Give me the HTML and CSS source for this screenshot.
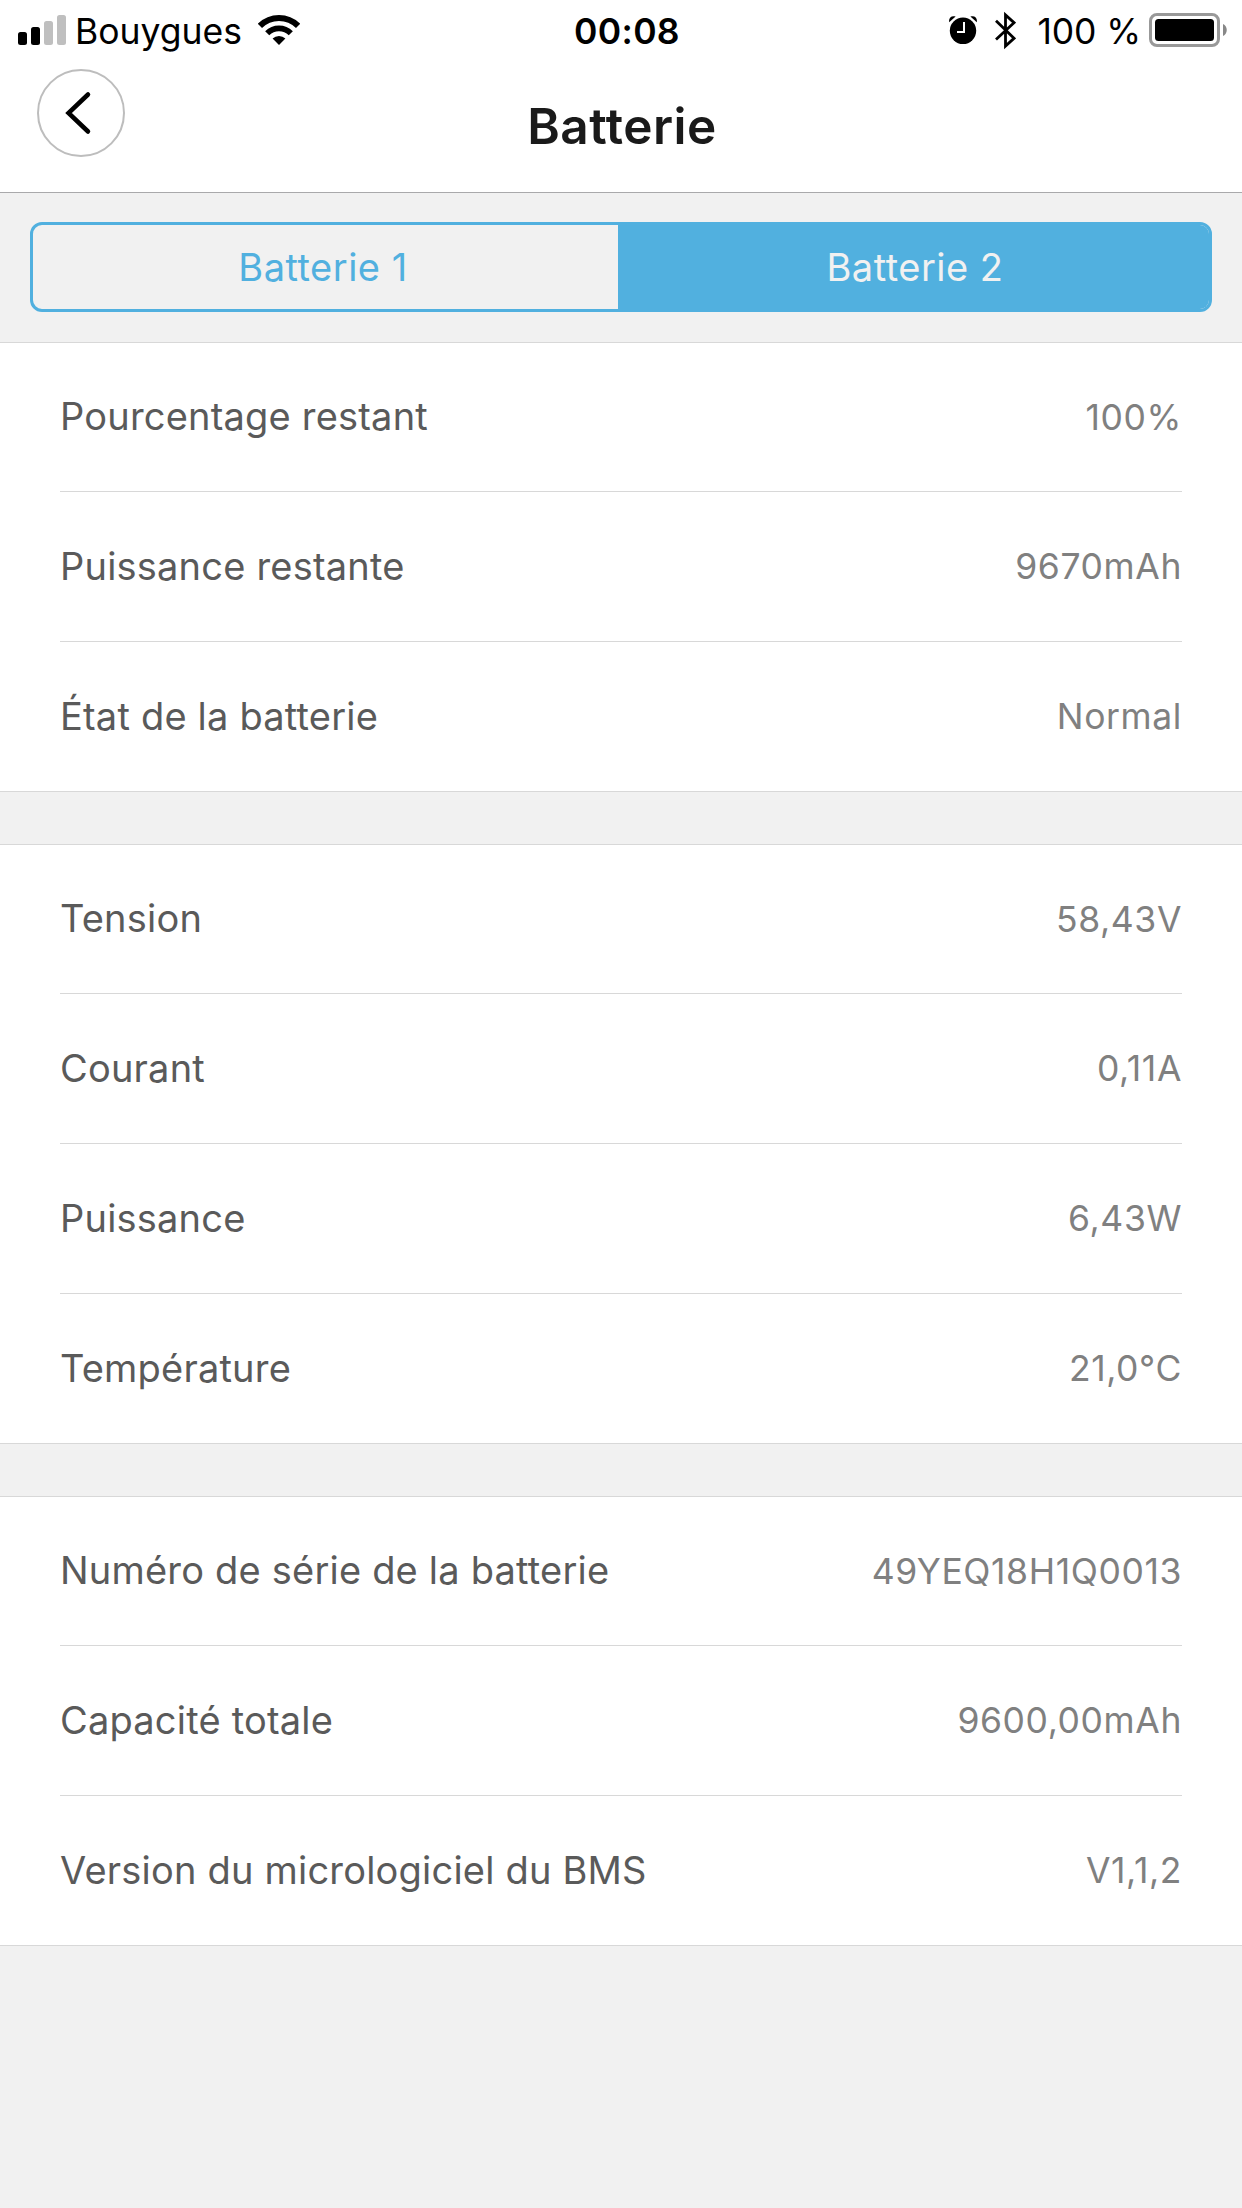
FILE: index.html
```html
<!DOCTYPE html>
<html lang="fr">
<head>
    <meta charset="UTF-8">
    <meta name="viewport" content="width=device-width, initial-scale=1.0">
    <title>Batterie</title>
    <link rel="stylesheet" href="styles.css">
</head>
<body>
    <div class="status-bar">
        <div class="status-left">
            <svg class="signal" width="48" height="62" viewBox="0 0 48 62">
                <rect x="0" y="32" width="9" height="13" rx="2.5"/>
                <rect x="13" y="27" width="9" height="18" rx="2.5"/>
                <rect x="26" y="21" width="9" height="24" rx="2.5" fill="#bfbfbf"/>
                <rect x="39" y="15" width="9" height="30" rx="2.5" fill="#bfbfbf"/>
            </svg>
            <span class="carrier">Bouygues</span>
            <svg class="wifi" width="42" height="62" viewBox="0 0 42 62">
                <path d="M1.9 25.9A27 27 0 0 1 40.1 25.9" fill="none" stroke="#000" stroke-width="6"/>
                <path d="M9.2 33.2A16.7 16.7 0 0 1 32.8 33.2" fill="none" stroke="#000" stroke-width="5.8"/>
                <path d="M21 45L14.6 38.6A9.1 9.1 0 0 1 27.4 38.6Z"/>
            </svg>
        </div>
        <div class="time">00:08</div>
        <div class="status-right">
            <svg class="alarm" width="28" height="62" viewBox="0 0 28 62">
                <circle cx="14" cy="30.8" r="13.2"/>
                <path d="M0.2 22.2C-0.6 17.6 2.6 15.2 6.6 16.6Z"/>
                <path d="M27.8 22.2C28.6 17.6 25.4 15.2 21.4 16.6Z"/>
                <path d="M15 22V32H8" fill="none" stroke="#fff" stroke-width="2"/>
            </svg>
            <svg class="bluetooth" width="21" height="62" viewBox="0 0 21 62">
                <path d="M1 20.8L19 38.3L10.5 46V15L19 22.7L1 39.6" fill="none" stroke="#000" stroke-width="2.8"/>
            </svg>
            <span class="percent">100 %</span>
            <svg class="battery" width="78" height="62" viewBox="0 0 78 62">
                <rect x="1.5" y="14.5" width="68" height="31" rx="6.5" fill="none" stroke="#999" stroke-width="3"/>
                <rect x="6" y="19" width="59" height="22" rx="3.5"/>
                <path d="M74 24C79 26 79 34 74 36Z" fill="#888"/>
            </svg>
        </div>
    </div>

    <div class="header">
        <button class="back">
            <svg width="88" height="88" viewBox="0 0 88 88">
                <circle cx="44" cy="44" r="43" fill="none" stroke="#bdbdbd" stroke-width="2"/>
                <path d="M51 25.5L31.5 44L51 62.5" fill="none" stroke="#000" stroke-width="4.5" stroke-linecap="round"/>
            </svg>
        </button>
        <h1>Batterie</h1>
    </div>

    <div class="tabs">
        <div class="segmented">
            <button>Batterie 1</button>
            <button class="active">Batterie 2</button>
        </div>
    </div>

    <div class="group">
        <div class="row">
            <span class="label">Pourcentage restant</span>
            <span class="value">100%</span>
        </div>
        <div class="row">
            <span class="label">Puissance restante</span>
            <span class="value">9670mAh</span>
        </div>
        <div class="row">
            <span class="label">État de la batterie</span>
            <span class="value">Normal</span>
        </div>
    </div>

    <div class="group">
        <div class="row">
            <span class="label">Tension</span>
            <span class="value">58,43V</span>
        </div>
        <div class="row">
            <span class="label">Courant</span>
            <span class="value">0,11A</span>
        </div>
        <div class="row">
            <span class="label">Puissance</span>
            <span class="value">6,43W</span>
        </div>
        <div class="row">
            <span class="label">Température</span>
            <span class="value">21,0°C</span>
        </div>
    </div>

    <div class="group">
        <div class="row">
            <span class="label">Numéro de série de la batterie</span>
            <span class="value">49YEQ18H1Q0013</span>
        </div>
        <div class="row">
            <span class="label">Capacité totale</span>
            <span class="value">9600,00mAh</span>
        </div>
        <div class="row">
            <span class="label">Version du micrologiciel du BMS</span>
            <span class="value">V1,1,2</span>
        </div>
    </div>
</body>
</html>
```

FILE: styles.css
```css
* {
    box-sizing: border-box;
}
body {
    margin: 0;
    min-height: 100vh;
    background-color: #f1f1f1;
    font-family: Inter, sans-serif;
}
svg {
    display: block;
}
button {
    padding: 0;
    border: none;
    background: none;
    font-family: inherit;
    cursor: pointer;
}

/* status bar */
.status-bar {
    display: flex;
    justify-content: space-between;
    height: 62px;
    padding: 0 15px 0 18px;
    background-color: #fff;
    color: #000;
    font-size: 35.5px;
    line-height: 64px;
}
.status-left,
.status-right {
    display: flex;
    flex: 1;
}
.status-right {
    justify-content: flex-end;
}
.carrier {
    margin: 0 16px 0 9px;
}
.time {
    padding-left: 9px;
    font-weight: 600;
    letter-spacing: 0.3px;
}
.bluetooth {
    margin: 0 21px 0 18px;
}
.percent {
    margin-right: 8px;
    letter-spacing: -0.1px;
}

/* title */
.header {
    display: grid;
    grid-template-columns: 88px 1fr 88px;
    height: 131px;
    padding: 0 37px;
    background-color: #fff;
    border-bottom: 1px solid #a9a9ab;
}
.back {
    height: 88px;
    margin-top: 7px;
}
h1 {
    margin: 0;
    padding-left: 2px;
    color: #1a1a1a;
    font-size: 49.5px;
    font-weight: 600;
    letter-spacing: 0.5px;
    line-height: 128px;
    text-align: center;
}

/* tabs */
.tabs {
    height: 149px;
    padding: 29px 30px;
}
.segmented {
    display: flex;
    height: 90px;
    border: 3px solid #51b0df;
    border-radius: 12px;
    overflow: hidden;
}
.segmented button {
    width: 585px;
    padding-right: 5px;
    color: #51b0df;
    font-size: 38px;
    letter-spacing: 0.5px;
}
.segmented .active {
    flex: 1;
    padding: 0 0 0 3px;
    background-color: #51b0df;
    color: #f1f1f1;
}

/* rows */
.group {
    margin-bottom: 52px;
    padding: 0 60px;
    background-color: #fff;
    border-top: 1px solid #d8d8d8;
    border-bottom: 1px solid #d8d8d8;
}
.row {
    display: flex;
    justify-content: space-between;
    height: 150px;
    border-bottom: 1px solid #d8d8d8;
    line-height: 148px;
}
.row:first-child {
    height: 149px;
    line-height: 146px;
}
.row:last-child {
    height: 149px;
    border-bottom: none;
}
.label {
    color: #5a5a5a;
    font-size: 38px;
    letter-spacing: 0.2px;
}
.value {
    color: #808080;
    font-size: 35.5px;
    letter-spacing: 0.6px;
    line-height: 150px;
}
```
